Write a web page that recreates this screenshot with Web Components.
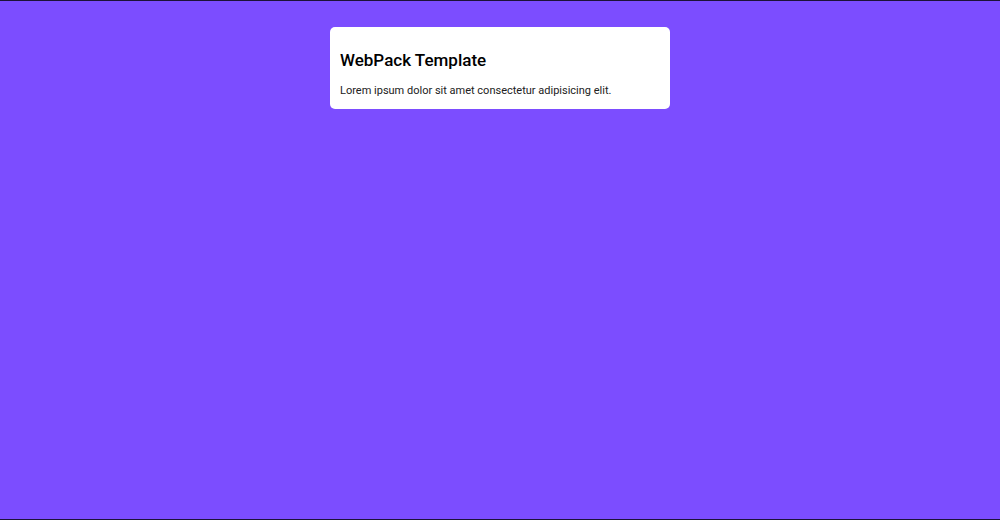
<!DOCTYPE html>
<html lang="en">
<head>
  <meta charset="UTF-8">
  <meta name="viewport" content="width=device-width, initial-scale=1.0">
  <title>WebPack Template</title>
  <style>
    * {
      box-sizing: border-box;
    }
    body {
      margin: 0;
      font-family: Roboto, sans-serif;
    }
  </style>
</head>
<body>
  <app-page>
    <app-card>
      <span slot="title">WebPack Template</span>
      Lorem ipsum dolor sit amet consectetur adipisicing elit.
    </app-card>
  </app-page>

  <script>
    class AppPage extends HTMLElement {
      constructor() {
        super();
        const shadow = this.attachShadow({ mode: 'open' });
        shadow.innerHTML = `
          <style>
            :host {
              display: block;
              box-sizing: border-box;
              min-height: 100vh;
              padding: 26px 16px;
              background: #7c4dff;
              border: solid #1c1238;
              border-width: 1px 0;
            }
            main {
              max-width: 340px;
              margin: 0 auto;
            }
          </style>
          <main><slot></slot></main>
        `;
      }
    }

    class AppCard extends HTMLElement {
      constructor() {
        super();
        const shadow = this.attachShadow({ mode: 'open' });
        shadow.innerHTML = `
          <style>
            :host {
              display: block;
              padding: 22px 10px 10px;
              background: #fff;
              border-radius: 5px;
              color: #212121;
            }
            h1 {
              margin: 0 0 12px;
              font-size: 17px;
              line-height: 22px;
              font-weight: 500;
              color: #000;
            }
            p {
              margin: 0;
              font-size: 11px;
              line-height: 16px;
            }
          </style>
          <h1><slot name="title"></slot></h1>
          <p><slot></slot></p>
        `;
      }
    }

    customElements.define('app-page', AppPage);
    customElements.define('app-card', AppCard);
  </script>
</body>
</html>
